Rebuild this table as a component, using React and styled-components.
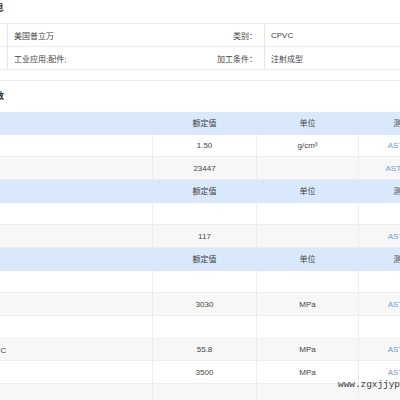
import React from "react";
import styled, { createGlobalStyle } from "styled-components";

const Global = createGlobalStyle`
  html, body { margin: 0; padding: 0; background: #fff; overflow: hidden; }
  body { font-family: "Liberation Sans", "Noto Sans CJK SC", sans-serif; color: #555; }
`;

const Page = styled.div`
  position: relative;
  width: 500px;
  margin-left: -40px;
  font-size: 8px;
`;

const Heading = styled.div`
  box-sizing: border-box;
  height: ${(p) => p.$h}px;
  line-height: ${(p) => p.$lh}px;
  padding-left: 8px;
  font-size: 9px;
  font-weight: bold;
  color: #333;
  border-top: ${(p) => (p.$line ? "1px solid #ececec" : "none")};
`;

const InfoTable = styled.div`
  border-top: 1px solid #ececec;
`;

const InfoRow = styled.div`
  display: grid;
  grid-template-columns: 48px 162px 95px 195px;
  height: 22px;
  border-bottom: 1px solid #ececec;
`;

const InfoLabel = styled.div`
  display: flex;
  align-items: center;
  justify-content: flex-end;
  padding-right: 7px;
  border-right: 1px solid #e6e6e6;
  color: #444;
`;

const InfoValue = styled.div`
  display: flex;
  align-items: center;
  padding-left: 6px;
  color: #444;
`;

const Gap = styled.div`
  height: 10px;
`;

const PropTable = styled.div``;

const PropRow = styled.div`
  display: grid;
  grid-template-columns: 193px 104px 102px 101px;
  box-sizing: border-box;
  height: 22.67px;
  background: ${(p) => (p.$head ? "#d9e8fa" : p.$alt ? "#f7f7f7" : "#fff")};
  border-bottom: 1px solid ${(p) => (p.$head ? "#d9e8fa" : "#eeeeee")};
`;

const Cell = styled.div`
  display: flex;
  align-items: center;
  justify-content: ${(p) => (p.$left ? "flex-start" : "center")};
  padding-left: ${(p) => (p.$left ? "8px" : "0")};
  white-space: nowrap;
  overflow: hidden;
  color: ${(p) => (p.$link ? "#6e9bd0" : "#444")};
  border-right: 1px solid ${(p) => (p.$head ? "transparent" : "#ececec")};
  &:last-child { border-right: none; }
`;

const Watermark = styled.div`
  position: absolute;
  left: 378px;
  top: 379px;
  font-family: "Liberation Mono", monospace;
  font-size: 9.4px;
  color: #3a3a3a;
  white-space: nowrap;
`;

const sections = [
  {
    title: "物理性能",
    rows: [
      ["密度", "1.50", "g/cm³", "ASTM D792"],
      ["熔体质量", "23447", "", "ASTM D1238"],
    ],
  },
  {
    title: "热性能",
    rows: [
      ["热变形", "", "", ""],
      ["1.8 MPa", "117", "", "ASTM D648"],
    ],
  },
  {
    title: "机械性能",
    rows: [
      ["拉伸模量", "", "", ""],
      ["23°C", "3030", "MPa", "ASTM D638"],
      ["拉伸强度", "", "", ""],
      ["屈服, 23°C", "55.8", "MPa", "ASTM D638"],
      ["弯曲模量", "3500", "MPa", "ASTM D790"],
      ["弯曲强度", "", "", ""],
    ],
  },
];

export default function App() {
  return (
    <>
      <Global />
      <Page>
        <Heading $h={23} $lh={17}>基本信息</Heading>
        <InfoTable>
          <InfoRow>
            <InfoLabel>品牌：</InfoLabel>
            <InfoValue>美国普立万</InfoValue>
            <InfoLabel>类别：</InfoLabel>
            <InfoValue>CPVC</InfoValue>
          </InfoRow>
          <InfoRow>
            <InfoLabel>用途：</InfoLabel>
            <InfoValue>工业应用;配件;</InfoValue>
            <InfoLabel>加工条件：</InfoLabel>
            <InfoValue>注射成型</InfoValue>
          </InfoRow>
        </InfoTable>
        <Gap />
        <Heading $h={32} $lh={30} $line>物性参数</Heading>
        <PropTable>
          {sections.map((s) => (
            <React.Fragment key={s.title}>
              <PropRow $head>
                <Cell $head $left>{s.title}</Cell>
                <Cell $head>额定值</Cell>
                <Cell $head>单位</Cell>
                <Cell $head>测试方法</Cell>
              </PropRow>
              {s.rows.map((r, i) => (
                <PropRow key={i} $alt={i % 2 === 1}>
                  <Cell $left>{r[0]}</Cell>
                  <Cell>{r[1]}</Cell>
                  <Cell>{r[2]}</Cell>
                  <Cell $link>{r[3]}</Cell>
                </PropRow>
              ))}
            </React.Fragment>
          ))}
        </PropTable>
        <Watermark>www.zgxjjypw.com</Watermark>
      </Page>
    </>
  );
}
